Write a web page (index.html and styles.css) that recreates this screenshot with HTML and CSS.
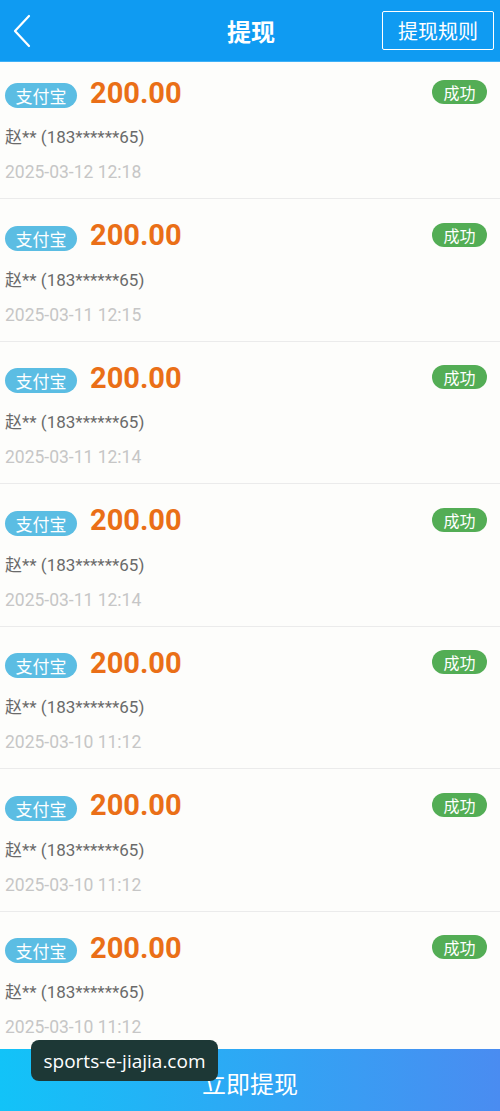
FILE: index.html
```html
<!DOCTYPE html>
<html lang="zh-CN">
<head>
    <meta charset="UTF-8">
    <meta name="viewport" content="width=device-width, initial-scale=1.0">
    <title>提现</title>
    <link rel="stylesheet" href="styles.css">
</head>
<body>
    <div class="page">
        <header class="topbar">
            <a class="back" href="#">
                <svg width="20" height="34" viewBox="0 0 20 34">
                    <path d="M17 2 L3 17 L17 32" fill="none" stroke="#fff" stroke-width="2.2" stroke-linecap="round" stroke-linejoin="round"/>
                </svg>
            </a>
            <h1 class="title">提现</h1>
            <a class="rules" href="#">提现规则</a>
        </header>

        <ul class="records">
            <li class="record">
                <div class="record-top">
                    <span class="channel">支付宝</span>
                    <span class="amount">200.00</span>
                    <span class="status">成功</span>
                </div>
                <div class="account">赵** (183******65)</div>
                <div class="time">2025-03-12 12:18</div>
            </li>
            <li class="record">
                <div class="record-top">
                    <span class="channel">支付宝</span>
                    <span class="amount">200.00</span>
                    <span class="status">成功</span>
                </div>
                <div class="account">赵** (183******65)</div>
                <div class="time">2025-03-11 12:15</div>
            </li>
            <li class="record">
                <div class="record-top">
                    <span class="channel">支付宝</span>
                    <span class="amount">200.00</span>
                    <span class="status">成功</span>
                </div>
                <div class="account">赵** (183******65)</div>
                <div class="time">2025-03-11 12:14</div>
            </li>
            <li class="record">
                <div class="record-top">
                    <span class="channel">支付宝</span>
                    <span class="amount">200.00</span>
                    <span class="status">成功</span>
                </div>
                <div class="account">赵** (183******65)</div>
                <div class="time">2025-03-11 12:14</div>
            </li>
            <li class="record">
                <div class="record-top">
                    <span class="channel">支付宝</span>
                    <span class="amount">200.00</span>
                    <span class="status">成功</span>
                </div>
                <div class="account">赵** (183******65)</div>
                <div class="time">2025-03-10 11:12</div>
            </li>
            <li class="record">
                <div class="record-top">
                    <span class="channel">支付宝</span>
                    <span class="amount">200.00</span>
                    <span class="status">成功</span>
                </div>
                <div class="account">赵** (183******65)</div>
                <div class="time">2025-03-10 11:12</div>
            </li>
            <li class="record">
                <div class="record-top">
                    <span class="channel">支付宝</span>
                    <span class="amount">200.00</span>
                    <span class="status">成功</span>
                </div>
                <div class="account">赵** (183******65)</div>
                <div class="time">2025-03-10 11:12</div>
            </li>
        </ul>

        <button class="withdraw">立即提现</button>

        <div class="watermark">sports-e-jiajia.com</div>
    </div>
</body>
</html>
```

FILE: styles.css
```css
* {
    box-sizing: border-box;
}
body {
    margin: 0;
    font-family: Roboto, "Noto Sans CJK SC", sans-serif;
    background: #fdfdfb;
}
.page {
    position: relative;
    height: 100vh;
    display: flex;
    flex-direction: column;
    overflow: hidden;
}
.topbar {
    height: 62px;
    flex-shrink: 0;
    background: #0f9bf2;
    border-bottom: 1px solid #3fb0f6;
    display: flex;
    align-items: center;
    padding: 0 6px 0 12px;
}
.back {
    width: 20px;
    height: 34px;
    display: block;
}
.title {
    flex: 1;
    margin: 0;
    text-align: center;
    font-size: 24px;
    font-weight: bold;
    color: #fff;
    padding-left: 88px;
    font-family: "Noto Sans CJK SC", sans-serif;
}
.rules {
    width: 112px;
    height: 39px;
    border: 1.5px solid #fff;
    border-radius: 2px;
    color: #fff;
    text-decoration: none;
    font-size: 20px;
    display: flex;
    align-items: center;
    justify-content: center;
    font-family: "Noto Sans CJK SC", sans-serif;
}
.records {
    flex: 1;
    list-style: none;
    margin: 0;
    padding: 0;
    overflow: hidden;
}
.record {
    padding: 26.5px 13px 14px 5px;
    border-bottom: 1px solid #ebebeb;
}
.record:first-child {
    padding-top: 21px;
}
.record-top {
    height: 25px;
    display: flex;
    align-items: center;
}
.channel {
    width: 72px;
    height: 25px;
    border-radius: 13px;
    background: #5bbde3;
    color: #fff;
    font-size: 17px;
    display: flex;
    align-items: center;
    justify-content: center;
    font-family: "Noto Sans CJK SC", sans-serif;
}
.amount {
    margin: -6px 0 0 13px;
    font-size: 29px;
    font-weight: bold;
    color: #ea6f17;
    flex: 1;
}
.status {
    align-self: flex-start;
    margin-top: -3px;
    width: 55px;
    height: 24px;
    border-radius: 12px;
    background: #53ad55;
    color: #fff;
    font-size: 16px;
    display: flex;
    align-items: center;
    justify-content: center;
    font-family: "Noto Sans CJK SC", sans-serif;
}
.account {
    margin-top: 17px;
    line-height: 24px;
    font-size: 17px;
    color: #6a6a6a;
}
.time {
    margin-top: 11px;
    line-height: 24px;
    font-size: 17.5px;
    color: #c6c6c6;
}
.withdraw {
    height: 62px;
    flex-shrink: 0;
    width: 100%;
    border: none;
    background: linear-gradient(90deg, #12c3f8, #4a8cf1);
    color: #fff;
    font-size: 24px;
    padding-top: 6px;
    font-family: "Noto Sans CJK SC", sans-serif;
}
.watermark {
    position: absolute;
    left: 31px;
    top: 1040px;
    width: 187px;
    height: 41px;
    border-radius: 8px;
    background: #1d3836;
    color: #fff;
    font-family: "Open Sans", sans-serif;
    font-size: 19px;
    display: flex;
    align-items: center;
    justify-content: center;
}
```
